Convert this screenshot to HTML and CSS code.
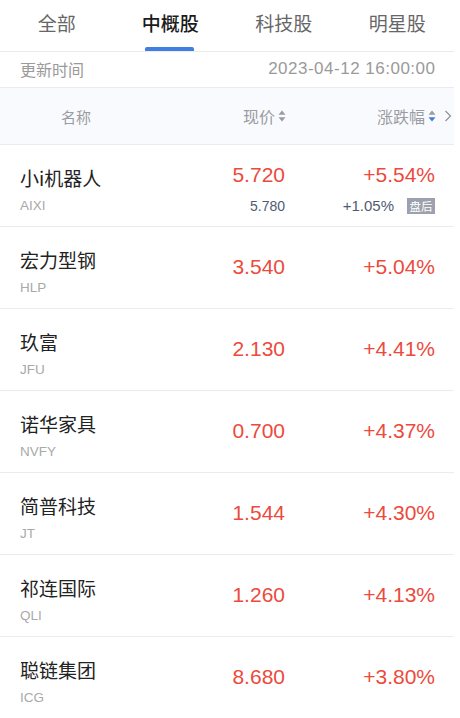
FILE: index.html
```html
<!DOCTYPE html>
<html lang="zh-CN">
<head>
<meta charset="utf-8">
<title>中概股</title>
<link rel="stylesheet" href="styles.css">
</head>
<body>
<div class="page">
  <nav class="tabs">
    <div class="tab">全部</div>
    <div class="tab active">中概股</div>
    <div class="tab">科技股</div>
    <div class="tab">明星股</div>
  </nav>
  <div class="update">
    <span>更新时间</span>
    <span class="date">2023-04-12 16:00:00</span>
  </div>
  <div class="head">
    <div class="h-name">名称</div>
    <div class="h-price">现价<svg class="sort" viewBox="0 0 8 12" width="8" height="12"><path d="M4 0.5 L7.5 4.8 H0.5 Z" fill="#9a9ca3"/><path d="M4 11.5 L7.5 7.2 H0.5 Z" fill="#9a9ca3"/></svg></div>
    <div class="h-change">涨跌幅<svg class="sort" viewBox="0 0 8 12" width="8" height="12"><path d="M4 0.5 L7.5 4.8 H0.5 Z" fill="#9a9ca3"/><path d="M4 11.5 L7.5 7.2 H0.5 Z" fill="#3f7fe3"/></svg><svg class="chev" viewBox="0 0 8 12" width="8" height="12"><path d="M1.5 1 L6.5 6 L1.5 11" fill="none" stroke="#8f939a" stroke-width="1.2"/></svg></div>
  </div>
  <div class="row first">
    <div class="name-cell"><div class="name">小i机器人</div><div class="code">AIXI</div></div>
    <div class="price-cell two"><div class="price">5.720</div><div class="sub">5.780</div></div>
    <div class="change-cell two"><div class="price">+5.54%</div><div class="sub subchg">+1.05%<span class="badge">盘后</span></div></div>
  </div>
  <div class="row">
    <div class="name-cell"><div class="name">宏力型钢</div><div class="code">HLP</div></div>
    <div class="price-cell"><div class="price">3.540</div></div>
    <div class="change-cell"><div class="price">+5.04%</div></div>
  </div>
  <div class="row">
    <div class="name-cell"><div class="name">玖富</div><div class="code">JFU</div></div>
    <div class="price-cell"><div class="price">2.130</div></div>
    <div class="change-cell"><div class="price">+4.41%</div></div>
  </div>
  <div class="row">
    <div class="name-cell"><div class="name">诺华家具</div><div class="code">NVFY</div></div>
    <div class="price-cell"><div class="price">0.700</div></div>
    <div class="change-cell"><div class="price">+4.37%</div></div>
  </div>
  <div class="row">
    <div class="name-cell"><div class="name">简普科技</div><div class="code">JT</div></div>
    <div class="price-cell"><div class="price">1.544</div></div>
    <div class="change-cell"><div class="price">+4.30%</div></div>
  </div>
  <div class="row">
    <div class="name-cell"><div class="name">祁连国际</div><div class="code">QLI</div></div>
    <div class="price-cell"><div class="price">1.260</div></div>
    <div class="change-cell"><div class="price">+4.13%</div></div>
  </div>
  <div class="row">
    <div class="name-cell"><div class="name">聪链集团</div><div class="code">ICG</div></div>
    <div class="price-cell"><div class="price">8.680</div></div>
    <div class="change-cell"><div class="price">+3.80%</div></div>
  </div>
</div>
</body>
</html>
```
FILE: styles.css
```css
* { box-sizing: border-box; }
html, body { margin: 0; padding: 0; background: #fff; }
body {
  font-family: "Liberation Sans", "Noto Sans CJK SC", sans-serif;
  color: #222;
  overflow: hidden;
}
.page { width: 454px; }

.tabs {
  display: grid;
  grid-template-columns: repeat(4, 1fr);
  height: 52px;
  border-bottom: 1px solid #ebebeb;
}
.tab {
  position: relative;
  text-align: center;
  font-size: 19px;
  line-height: 24px;
  padding-top: 11px;
  color: #666;
  font-family: "Noto Sans CJK SC", sans-serif;
}
.tab.active { color: #1c1c1c; font-weight: 500; }
.tab.active::after {
  content: "";
  position: absolute;
  left: 50%;
  bottom: 0;
  width: 49px;
  height: 4px;
  margin-left: -25px;
  background: #3f7fe3;
  border-radius: 2px 2px 0 0;
}

.update {
  display: flex;
  justify-content: space-between;
  align-items: center;
  height: 36px;
  padding: 0 19px 1px 20px;
  border-bottom: 1px solid #ebebeb;
  font-size: 16px;
  color: #9a9a9a;
}
.update span:first-child { font-family: "Noto Sans CJK SC", sans-serif; font-size: 16px; }
.date { font-size: 17px; letter-spacing: 0.5px; margin-right: -0.5px; }

.head {
  display: grid;
  grid-template-columns: 165px 101px 166px;
  padding-left: 20px;
  height: 57px;
  align-items: center;
  background: #f9fafd;
  border-bottom: 1px solid #ebebeb;
  font-family: "Noto Sans CJK SC", sans-serif;
  font-size: 16px;
  color: #9a9ca3;
}
.h-name { padding-left: 41px; font-size: 15px; }
.h-price, .h-change {
  display: flex;
  justify-content: flex-end;
  align-items: center;
}
.sort { margin-left: 3px; }
.chev { margin-left: 8px; }

.row {
  display: grid;
  grid-template-columns: 165px 100px 150px;
  padding-left: 20px;
  height: 82px;
  border-bottom: 1px solid #ececec;
}
.name-cell { padding-top: 21px; }
.name {
  font-family: "Noto Sans CJK SC", sans-serif;
  font-size: 19px;
  line-height: 24px;
  color: #222;
}
.code {
  margin-top: 7px;
  font-size: 13.5px;
  line-height: 18px;
  color: #a9a9a9;
}
.price-cell, .change-cell {
  display: flex;
  flex-direction: column;
  justify-content: center;
  align-items: flex-end;
  padding-bottom: 1px;
}
.price {
  font-size: 21px;
  line-height: 24px;
  color: #ec4a3c;
}
.two { justify-content: flex-start; padding-top: 18px; }
.sub {
  margin-top: 10px;
  font-size: 14px;
  line-height: 18px;
  color: #4f5b73;
}
.subchg { display: flex; align-items: center; font-size: 15px; }
.badge {
  display: inline-block;
  margin-left: 13px;
  width: 28px;
  height: 16px;
  line-height: 16px;
  text-align: center;
  background: #9ca1ad;
  color: #fff;
  font-family: "Noto Sans CJK SC", sans-serif;
  font-size: 11.5px;
}
```
